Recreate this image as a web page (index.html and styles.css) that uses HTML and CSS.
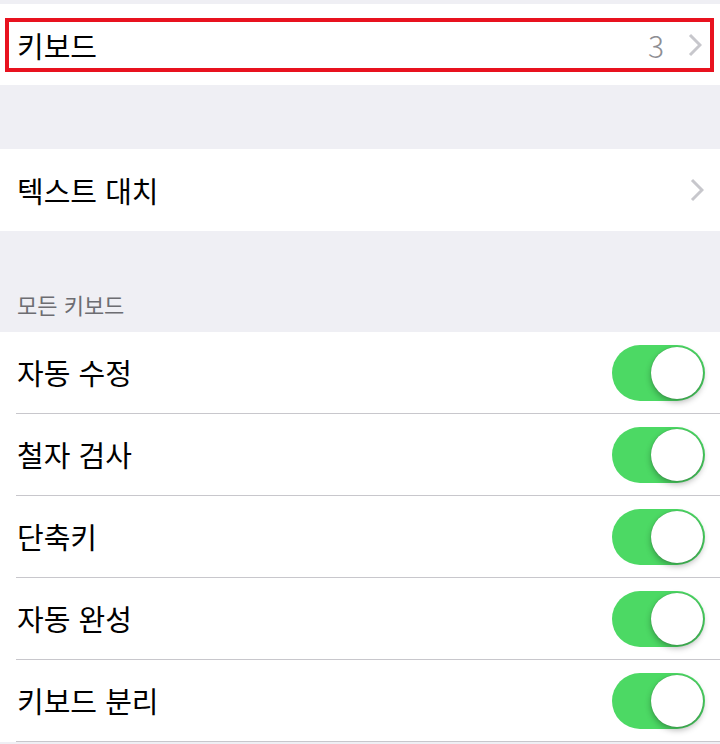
FILE: index.html
```html
<!DOCTYPE html>
<html lang="ko">
<head>
  <meta charset="UTF-8" />
  <title>키보드</title>
  <link rel="stylesheet" href="styles.css">
</head>
<body>

  <div class="gap-top"></div>

  <div class="group">
    <div class="row row-marked">
      <div class="marked">
        <span class="label">키보드</span>
        <span class="detail">3</span>
        <svg class="chevron" width="14" height="24" viewBox="0 0 14 24">
          <path d="M2 2 L12 12 L2 22" fill="none" stroke="#c7c7cc" stroke-width="3" />
        </svg>
      </div>
    </div>
  </div>

  <div class="gap"></div>

  <div class="group">
    <div class="row">
      <span class="label">텍스트 대치</span>
      <svg class="chevron" width="14" height="24" viewBox="0 0 14 24">
        <path d="M2 2 L12 12 L2 22" fill="none" stroke="#c7c7cc" stroke-width="3" />
      </svg>
    </div>
  </div>

  <div class="section-header">모든 키보드</div>

  <div class="group list">
    <div class="row line">
      <span class="label">자동 수정</span>
      <div class="switch"><div class="knob"></div></div>
    </div>
    <div class="row line">
      <span class="label">철자 검사</span>
      <div class="switch"><div class="knob"></div></div>
    </div>
    <div class="row line">
      <span class="label">단축키</span>
      <div class="switch"><div class="knob"></div></div>
    </div>
    <div class="row line">
      <span class="label">자동 완성</span>
      <div class="switch"><div class="knob"></div></div>
    </div>
    <div class="row line">
      <span class="label">키보드 분리</span>
      <div class="switch"><div class="knob"></div></div>
    </div>
  </div>

</body>
</html>
```

FILE: styles.css
```css
* {
  box-sizing: border-box;
}

body {
  margin: 0;
  padding: 0;
  background: #efeff4;
  font-family: "Noto Sans CJK KR", "Noto Sans", sans-serif;
  color: #000;
}

.gap-top {
  height: 4px;
}

.gap {
  height: 64px;
}

.group {
  background: #fff;
}

.row {
  height: 82px;
  display: flex;
  align-items: center;
  padding: 0 16px 0 17px;
}

.label {
  flex: 1;
  font-size: 29px;
  line-height: 1;
}

.chevron {
  display: block;
}

/* red highlight box around first row */
.row-marked {
  height: 81px;
  padding: 14px 6px 13px 5px;
  align-items: stretch;
}

.marked {
  flex: 1;
  display: flex;
  align-items: center;
  border: 4px solid #e8121f;
  padding: 0 8px 0 8px;
}

.detail {
  font-size: 30px;
  font-weight: 300;
  color: #8e8e93;
  margin-right: 24px;
}

.section-header {
  height: 101px;
  display: flex;
  align-items: flex-end;
  padding: 0 0 12px 17px;
  font-size: 22px;
  color: #6d6d72;
}

.list {
  padding-left: 16px;
}

.list .row {
  padding-left: 1px;
  padding-right: 15px;
}

.line {
  border-bottom: 1px solid #c8c7cc;
}

.switch {
  width: 93px;
  height: 56px;
  border-radius: 28px;
  background: #4cd964;
  position: relative;
}

.knob {
  position: absolute;
  right: 2px;
  top: 2px;
  width: 52px;
  height: 52px;
  border-radius: 50%;
  background: #fff;
  box-shadow: 0 3px 6px rgba(0, 0, 0, 0.3), 0 0 1px rgba(0, 0, 0, 0.3);
}
```
